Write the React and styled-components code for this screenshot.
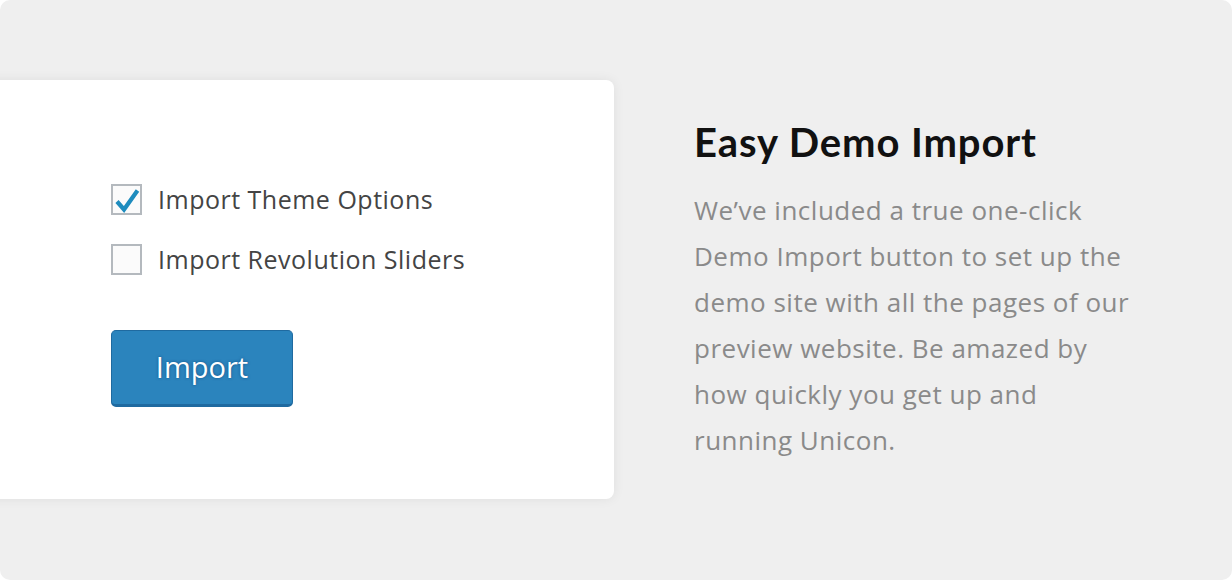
import styled, { createGlobalStyle } from "styled-components";

const GlobalStyle = createGlobalStyle`
  html, body {
    margin: 0;
    padding: 0;
    background: #ffffff;
  }
`;

const Panel = styled.div`
  display: flex;
  align-items: flex-start;
  column-gap: 80px;

  width: 1232px;
  height: 580px;
  padding-top: 80px;
  box-sizing: border-box;
  overflow: hidden;

  border-radius: 10px;
  background-color: #efefef;
`;

const Card = styled.div`
  display: flex;
  flex-direction: column;
  align-items: flex-start;
  flex-shrink: 0;

  width: 634px;
  height: 419px;
  margin-left: -20px;
  padding: 104px 0 0 131px;
  box-sizing: border-box;

  border-radius: 8px;
  background-color: #ffffff;
  box-shadow: 0 0 12px rgba(0, 0, 0, 0.07);
`;

const OptionList = styled.div`
  display: flex;
  flex-direction: column;
  row-gap: 29px;
`;

const Option = styled.label`
  display: flex;
  align-items: center;
  column-gap: 16px;

  color: #444444;
  font-family: "Open Sans", "Liberation Sans", sans-serif;
  font-size: 25px;
  letter-spacing: 0.5px;
  line-height: 31px;
`;

const Box = styled.span`
  display: flex;
  width: 31px;
  height: 31px;
  box-sizing: border-box;

  border: 2px solid #b4b9be;
  background-color: #fbfbfb;
`;

const ImportButton = styled.button`
  width: 182px;
  height: 77px;
  margin-top: 55px;
  padding: 0 0 2px;
  box-sizing: border-box;

  border: 1px solid #1f6aa0;
  border-bottom-width: 3px;
  border-radius: 5px;
  background-color: #2b84bd;

  color: #ffffff;
  font-family: "Open Sans", "Liberation Sans", sans-serif;
  font-size: 29px;
  text-shadow: 0 0 3px rgba(0, 50, 100, 0.6);
  cursor: pointer;
`;

const Info = styled.div`
  width: 500px;
  padding-top: 40px;
`;

const Title = styled.h2`
  margin: 0;

  color: #111111;
  font-family: Lato, "Noto Sans", sans-serif;
  font-size: 40px;
  font-weight: 700;
  letter-spacing: 0.9px;
  line-height: 44px;
`;

const Text = styled.p`
  margin: 23px 0 0;

  color: #8a8a8a;
  font-family: "Open Sans", "Noto Sans", sans-serif;
  font-size: 26px;
  letter-spacing: 0.5px;
  line-height: 46px;
`;

const Checkbox = ({ checked }) => (
  <Box>
    {checked && (
      <svg width="27" height="27" viewBox="0 0 27 27">
        <path
          d="M4 15.5 L11 23.5 L24.5 4.5"
          fill="none"
          stroke="#1e8cbe"
          strokeWidth="4.2"
          strokeLinejoin="miter"
        />
      </svg>
    )}
  </Box>
);

const App = () => {
  return (
    <>
      <GlobalStyle />
      <Panel>
        <Card>
          <OptionList>
            <Option>
              <Checkbox checked />
              Import Theme Options
            </Option>
            <Option>
              <Checkbox />
              Import Revolution Sliders
            </Option>
          </OptionList>
          <ImportButton>Import</ImportButton>
        </Card>
        <Info>
          <Title>Easy Demo Import</Title>
          <Text>
            We’ve included a true one-click
            <br />
            Demo Import button to set up the
            <br />
            demo site with all the pages of our
            <br />
            preview website. Be amazed by
            <br />
            how quickly you get up and
            <br />
            running Unicon.
          </Text>
        </Info>
      </Panel>
    </>
  );
};

export default App;
